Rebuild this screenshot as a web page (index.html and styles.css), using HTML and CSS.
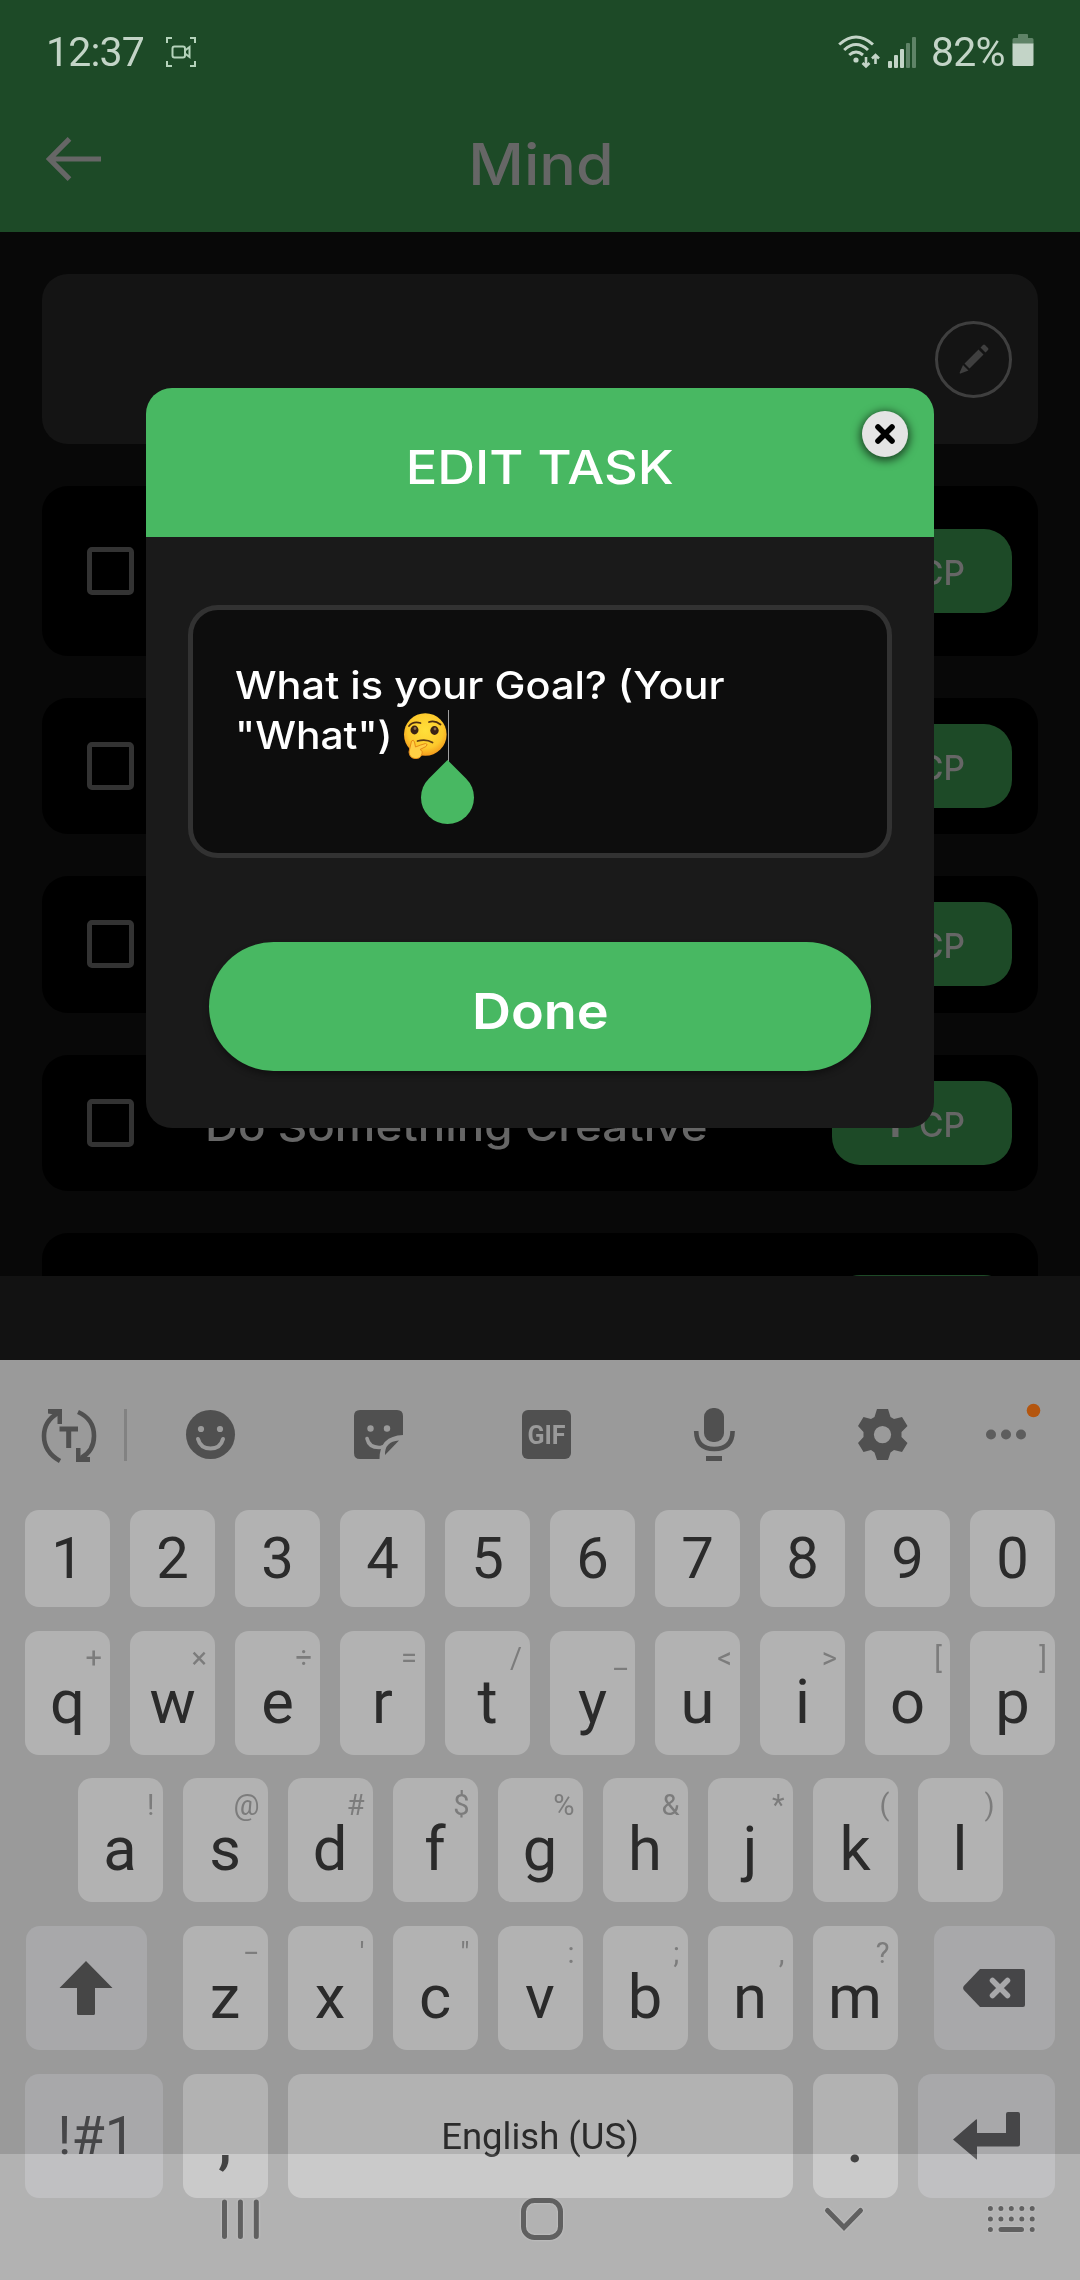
FILE: index.html
```html
<!DOCTYPE html>
<html lang="en">
<head>
<meta charset="utf-8">
<title>Mind</title>
<link rel="stylesheet" href="styles.css">
</head>
<body>
<div class="phone">
  <header class="top">
    <div class="status">
      <span class="clock">12:37</span>
      <svg class="rec" width="30" height="30" viewBox="0 0 30 30" fill="none" stroke="#b5d3bb" stroke-width="2"><path d="M1 6V1H6M24 1H29V6M29 24V29H24M6 29H1V24"/><rect x="6.500" y="9.500" width="12.500" height="11" rx="2"/><path d="M19 13.500L23.500 10V20L19 16.500"/></svg>
      <span class="grow"></span>
      <svg class="wifi" width="43" height="34" viewBox="0 0 43 34" fill="none" stroke="#c3d4c7" stroke-width="3"><path d="M1.200 9.500Q18 -5.500 35 9.500M6.200 15Q18 4 30 15M11.200 20Q18 14 25 20"/><circle cx="18" cy="25" r="2.600" fill="#c3d4c7" stroke="none"/><path d="M28 22V31M24.500 28L28 31.500L31.500 28M37.500 29V20M34 23.500L37.500 20L41 23.500" stroke-width="2.600"/></svg>
      <svg class="signal" width="29" height="31" viewBox="0 0 29 31"><g fill="#c3d4c7"><rect x="0" y="24" width="4" height="7" rx="1"/><rect x="6" y="18" width="4" height="13" rx="1"/><rect x="12" y="12" width="4" height="19" rx="1"/></g><g fill="#5f8367"><rect x="18" y="6" width="4" height="25" rx="1"/><rect x="24" y="0" width="4" height="31" rx="1"/></g></svg>
      <span class="pct">82%</span>
      <svg class="batt" width="22" height="32" viewBox="0 0 22 32"><path d="M6 4V1Q6 0 7 0H15Q16 0 16 1V4H20Q21.500 4 21.500 5.500V10H.5V5.500Q.5 4 2 4Z" fill="#5f8367"/><path d="M.5 9.500H21.500V30.500Q21.500 32 20 32H2Q.5 32 .5 30.500Z" fill="#c3d4c7"/></svg>
    </div>
    <div class="appbar">
      <svg class="back" width="56" height="44" viewBox="0 0 56 44" fill="none" stroke="#666" stroke-width="5.200"><path d="M23.500 1.800L3.500 22L23.500 42.200M3.500 22H55"/></svg>
      <h1 class="title">Mind</h1>
    </div>
  </header>

  <main class="list">
    <div class="card head"><span class="pencil"><svg width="30" height="30" viewBox="0 0 30 30" fill="#3f3f3f"><path d="M21.500 3.500L24 1Q25 0 26 1L29 4Q30 5 29 6L26.500 8.500ZM5.500 19.500L19.500 5.500L24.500 10.500L10.500 24.500ZM4 21L9.500 26.500L1.500 29.500Q.500 30 .700 28.500Z"/></svg></span></div>
    <div class="card tall"><span class="box"></span><span class="name"></span><span class="cp"><b>&nbsp;</b>CP</span></div>
    <div class="card"><span class="box"></span><span class="name"></span><span class="cp"><b>&nbsp;</b>CP</span></div>
    <div class="card"><span class="box"></span><span class="name"></span><span class="cp"><b>&nbsp;</b>CP</span></div>
    <div class="card"><span class="box"></span><span class="name"><span class="nametext">Do Something Creative</span></span><span class="cp"><b>1</b>CP</span></div>
    <div class="card tall"><span class="box"></span><span class="name"></span><span class="cp last"></span></div>
  </main>
  <div class="footer"></div>

  <section class="keyboard">
    <div class="tools">
      <svg width="1080" height="80" viewBox="0 1395 1080 80" fill="#505050">
        <g fill="none" stroke="#505050" stroke-width="4.600"><path d="M60 1461Q44 1452 44 1436Q44 1421 58 1413M78 1412Q94 1419 94 1436Q94 1451 81 1458"/></g>
        <path d="M48 1409H62V1424H57.500V1415L48 1413.500ZM76 1448H80.500V1457H90V1462H76Z"/>
        <path d="M59.500 1426.500H78V1431.500H71.200V1448H66.200V1431.500H59.500Z"/>
        <rect x="124" y="1409" width="3" height="52" fill="#828282"/>
        <circle cx="210.500" cy="1434.500" r="24.500"/>
        <g fill="#9a9a9a"><circle cx="201" cy="1429" r="3.100"/><circle cx="220" cy="1429" r="3.100"/></g>
        <path d="M198 1439Q200.500 1448.500 210.500 1448.500Q220.500 1448.500 223 1439" fill="none" stroke="#9a9a9a" stroke-width="4" stroke-linecap="round"/>
        <path d="M360 1410H397Q403 1410 403 1416V1435Q379.500 1436 379.500 1459H360Q354 1459 354 1453V1416Q354 1410 360 1410ZM399 1440.500L385 1455Q384.500 1441.500 399 1440.500Z"/>
        <g fill="#9a9a9a"><circle cx="370.500" cy="1428.500" r="3.200"/><circle cx="387" cy="1428.500" r="3.200"/></g>
        <path d="M367 1438.500Q369 1447.500 379 1447.500Q381 1447.500 382 1447" fill="none" stroke="#9a9a9a" stroke-width="3.600" stroke-linecap="round"/>
        <rect x="522" y="1410" width="49" height="49" rx="6"/>
        <text x="546.500" y="1443.700" class="gif" text-anchor="middle" fill="#9a9a9a">GIF</text>
        <rect x="704" y="1408" width="20" height="34" rx="9"/>
        <path d="M696.200 1431Q696.500 1449 714.300 1449Q732.300 1449 732.600 1431" fill="none" stroke="#505050" stroke-width="4.600"/>
        <rect x="706" y="1456" width="16" height="5"/>
        <path fill-rule="evenodd" d="M877 1409H888L890.500 1417L894 1419L902 1417L907.500 1426L901.500 1432V1437L907.500 1443L902 1452L894 1450L890.500 1452.500L888 1460H877L874.500 1452.500L871 1450L863.500 1452L858 1443L863.500 1437V1432L858 1426L863.500 1417L871 1419L874.500 1417ZM882.500 1426A8.600 8.600 0 1 0 882.500 1443.200A8.600 8.600 0 1 0 882.500 1426Z"/>
        <g fill="#5d5d5d"><circle cx="991" cy="1434.500" r="5"/><circle cx="1006" cy="1434.500" r="5"/><circle cx="1021" cy="1434.500" r="5"/></g>
        <circle cx="1033.500" cy="1410.500" r="6.800" fill="#b4560f"/>
      </svg>
    </div>
    <div class="row nums"><span class="key">1</span><span class="key">2</span><span class="key">3</span><span class="key">4</span><span class="key">5</span><span class="key">6</span><span class="key">7</span><span class="key">8</span><span class="key">9</span><span class="key">0</span></div>
    <div class="row"><span class="key"><i>+</i>q</span><span class="key"><i>×</i>w</span><span class="key"><i>÷</i>e</span><span class="key"><i>=</i>r</span><span class="key"><i>/</i>t</span><span class="key"><i>_</i>y</span><span class="key"><i>&lt;</i>u</span><span class="key"><i>&gt;</i>i</span><span class="key"><i>[</i>o</span><span class="key"><i>]</i>p</span></div>
    <div class="row"><span class="key"><i>!</i>a</span><span class="key"><i>@</i>s</span><span class="key"><i>#</i>d</span><span class="key"><i>$</i>f</span><span class="key"><i>%</i>g</span><span class="key"><i>&amp;</i>h</span><span class="key"><i>*</i>j</span><span class="key"><i>(</i>k</span><span class="key"><i>)</i>l</span></div>
    <div class="row">
      <span class="key fn shift"><svg width="54" height="54" viewBox="0 0 54 54" fill="#464646"><path d="M27 0L53.500 27H36V52.500Q36 54 34.500 54H19.500Q18 54 18 52.500V27H.5Z"/></svg></span>
      <span class="key"><i>−</i>z</span><span class="key"><i>'</i>x</span><span class="key"><i>"</i>c</span><span class="key"><i>:</i>v</span><span class="key"><i>;</i>b</span><span class="key"><i>,</i>n</span><span class="key"><i>?</i>m</span>
      <span class="key fn bksp"><svg width="62" height="38" viewBox="0 0 62 38"><path d="M17 0H60Q62 0 62 2V36Q62 38 60 38H17L.8 21Q-.5 19 .8 17Z" fill="#464648"/><path d="M29.500 11.500L44.500 26.500M44.500 11.500L29.500 26.500" stroke="#a8a8aa" stroke-width="5.500" stroke-linecap="round"/></svg></span>
    </div>
    <div class="row">
      <span class="key fn sym">!#1</span><span class="key punct">,</span><span class="key space">English (US)</span><span class="key punct">.</span>
      <span class="key fn enter"><svg width="67" height="48" viewBox="0 0 67 48" fill="#464648"><path d="M0 27.500L23 7.500Q24 7 24 8V21H53V2Q53 0 55 0H65Q67 0 67 2V32.500Q67 34.500 65 34.500H24V47Q24 48 23 47Z"/></svg></span>
    </div>
  </section>

  <nav class="nav">
    <svg width="1080" height="126" viewBox="0 2154 1080 126" fill="none" stroke="#606060" stroke-width="5" stroke-linecap="round">
      <path d="M224.500 2202V2236.500M240.400 2202V2236.500M256.300 2202V2236.500"/>
      <rect x="523.500" y="2200.500" width="37" height="37" rx="11"/>
      <path d="M827.500 2210.500L844 2227.500L860.500 2210.500"/>
      <path d="M1001 2229.500H1021.500"/>
      <path d="M990.400 2208.500h.01M1000.900 2208.500h.01M1011.300 2208.500h.01M1021.800 2208.500h.01M1032.200 2208.500h.01M990.400 2219h.01M1000.900 2219h.01M1011.300 2219h.01M1021.800 2219h.01M1032.200 2219h.01M990.400 2229.500h.01M1032.200 2229.500h.01"/>
    </svg>
  </nav>

  <section class="modal">
    <div class="mhead"><h2 class="mtitle">EDIT TASK</h2>
      <span class="close"><svg width="22" height="22" viewBox="0 0 22 22" stroke="#000" stroke-width="5.600" stroke-linecap="round"><path d="M4 4L18 18M18 4L4 18"/></svg></span>
    </div>
    <div class="mbody">
      <div class="field">
        <p class="l1">What is your Goal? (Your</p>
        <div class="l2row"><p class="l2">"What")</p>
          <svg class="emoji" role="img" aria-label="thinking face" width="44" height="46" viewBox="0 0 44 46">
            <defs><radialGradient id="g" cx=".5" cy=".4" r=".6"><stop offset="0" stop-color="#ffe03a"/><stop offset=".7" stop-color="#fdc92c"/><stop offset="1" stop-color="#f39a1c"/></radialGradient></defs>
            <circle cx="22.300" cy="21.500" r="21.300" fill="url(#g)"/>
            <ellipse cx="11.500" cy="17" rx="4" ry="4.400" fill="#3a2314"/><ellipse cx="31.500" cy="17.500" rx="4.200" ry="4.400" fill="#3a2314"/><circle cx="12" cy="15.500" r="1.400" fill="#8a6a4a"/><circle cx="32" cy="16" r="1.400" fill="#8a6a4a"/>
            <path d="M6 13Q10 8 17.500 10M26 9Q32 7 37.500 11.500" fill="none" stroke="#4b2d12" stroke-width="1.800" stroke-linecap="round"/>
            <path d="M14.500 28Q23 25.500 29.500 29.500" fill="none" stroke="#5d3b14" stroke-width="1.800" stroke-linecap="round"/>
            <path d="M8.500 28Q10.500 26 11.500 29L12.500 34Q17 32 22.500 30.500Q25.500 31 23 33.500L17 36.500Q20.500 38 18.500 42Q17 46 12 45.500Q6.500 45 6 39Z" fill="#ffcf45" stroke="#e58a17" stroke-width="1"/>
          </svg>
          <span class="caret"></span>
        </div>
        <span class="handle"></span>
      </div>
      <button class="done"><span class="donetext">Done</span></button>
    </div>
  </section>
</div>
</body>
</html>
```

FILE: styles.css
```css
* { box-sizing: border-box; margin: 0; padding: 0; }
body { background: #080808; font-family: Inter, "Liberation Sans", sans-serif; }
svg { display: block; flex: none; }
.phone { position: relative; width: 1080px; height: 2280px; overflow: hidden; display: flex; flex-direction: column; }

.top { height: 232px; background: #1d4a27; flex: none; display: flex; flex-direction: column; }
.status { height: 104px; padding: 0 46px; display: flex; align-items: center; font-family: Roboto, sans-serif; font-size: 41px; line-height: 48px; color: #c3d4c7; }
.clock { letter-spacing: -0.8px; margin-right: 21px; width: 99px; }
.grow { flex: 1; }
.wifi { margin-right: 7px; }
.signal { margin-right: 14px; }
.pct { width: 74px; letter-spacing: -0.8px; margin-right: 7px; }
.batt { margin-top: -4px; }
.appbar { flex: 1; display: flex; align-items: center; padding: 0 46px; }
.back { margin-bottom: 18px; }
.title { flex: 1; margin-right: 54px; text-align: center; font-size: 57px; font-weight: 500; color: #666; line-height: 70px; margin-bottom: 6px; transform: scaleX(1.070); }

.list { height: 1044px; flex: none; padding: 42px 42px 0; display: flex; flex-direction: column; gap: 42px; overflow: hidden; }
.card { width: 996px; height: 136.500px; flex: none; border-radius: 26px; background: #000; display: flex; align-items: center; padding: 0 26px 0 45px; }
.card.tall { height: 169.500px; }
.card.head { height: 170px; background: #141414; justify-content: flex-end; }
.pencil { width: 77px; height: 77px; border: 3px solid #3f3f3f; border-radius: 50%; display: flex; align-items: center; justify-content: center; }
.box { width: 47px; height: 48px; border: 5px solid #333; border-radius: 5px; margin-right: 71px; }
.name { flex: 1; font-size: 40px; font-weight: 500; color: #666; white-space: nowrap; }
.nametext { display: inline-block; transform: scaleX(1.142); transform-origin: left; margin-top: 8px; }
.cp { width: 180px; height: 84px; border-radius: 28px; background: #1d4a27; color: #666; font-size: 33.500px; font-weight: 500; display: flex; align-items: baseline; padding: 18px 0 0 50px; line-height: 42px; gap: 20px; }
.cp.last { margin-bottom: 2px; }
.cp b { font-size: 47px; font-weight: 600; width: 17px; }
.footer { height: 84px; background: #121212; flex: none; }

.keyboard { height: 920px; background: #9a9a9a; flex: none; padding: 35px 0 0; display: flex; flex-direction: column; gap: 23.700px; font-family: Roboto, sans-serif; color: #2b2b2b; }
.tools { height: 91.300px; flex: none; }
.gif { font: 700 25px Roboto, sans-serif; }
.row { display: flex; justify-content: center; gap: 20px; height: 124px; flex: none; }
.row.nums { height: 97px; }
.key { position: relative; width: 85px; border-radius: 14px; background: #b2b2b2; font-size: 61.500px; line-height: 72px; text-align: center; padding-top: 35px; }
.nums .key { font-size: 58px; line-height: 97px; padding: 0; }
.key i { position: absolute; top: 9px; right: 8px; font-size: 29px; line-height: 36px; font-style: normal; color: #7c7c7c; }
.key.fn { background: #a8a8aa; color: #464648; display: flex; align-items: center; justify-content: center; padding: 0; }
.key.shift { width: 121px; margin-right: 16px; }
.key.bksp { width: 121px; margin-left: 16px; }
.key.sym { width: 137.500px; font-size: 54px; padding-left: 5px; }
.key.enter { width: 137.500px; }
.key.space { width: 505px; font-size: 36.500px; line-height: 126px; padding: 0; }
.key.punct { font-weight: 500; padding-top: 31px; }
.nav { position: absolute; left: 0; bottom: 0; width: 1080px; height: 126px; }
.nav::before { content: ""; position: absolute; inset: 0; background: #181818; mix-blend-mode: plus-lighter; }
.nav svg { position: relative; filter: drop-shadow(0 0 1px #ccc); }

.modal { position: absolute; left: 146px; top: 388px; width: 788px; height: 740px; border-radius: 26px; background: #1a1a1a; overflow: hidden; }
.mhead { position: relative; height: 149px; background: #48b862; display: flex; justify-content: center; align-items: center; }
.mtitle { color: #fff; font-size: 46px; font-weight: 500; line-height: 56px; transform: scaleX(1.138); margin-top: 9px; }
.close { position: absolute; left: 716px; top: 23px; width: 46px; height: 46px; border-radius: 50%; background: #e4e4e4; box-shadow: 0 2px 8px 2px rgba(0,0,0,.6); display: flex; align-items: center; justify-content: center; }
.mbody { padding: 68px 42px 0; display: flex; flex-direction: column; align-items: center; gap: 84px; }
.field { position: relative; width: 704px; height: 253px; border: 5px solid #323232; border-radius: 30px; background: #0d0d0d; padding: 51px 0 0 42px; color: #fff; font-size: 38px; font-weight: 500; line-height: 49.400px; white-space: nowrap; }
.l1 { transform: scaleX(1.092); transform-origin: left; }
.l2 { transform: scaleX(1.072); transform-origin: left; width: 168px; }
.l2row { display: flex; align-items: center; height: 51px; }
.caret { width: 1px; height: 52px; background: #a0a0a0; margin-left: 1px; }
.handle { position: absolute; left: 228px; top: 161px; width: 53px; height: 53px; border-radius: 0 50% 50% 50%; background: #48b862; transform: rotate(45deg); }
.done { width: 662px; height: 129px; border: 0; border-radius: 65px; background: #48b862; color: #fff; font: 600 50px Inter, sans-serif; box-shadow: 0 4px 6px rgba(0,0,0,.35); padding-top: 8px; }
.donetext { display: inline-block; transform: scaleX(1.080); }
```
